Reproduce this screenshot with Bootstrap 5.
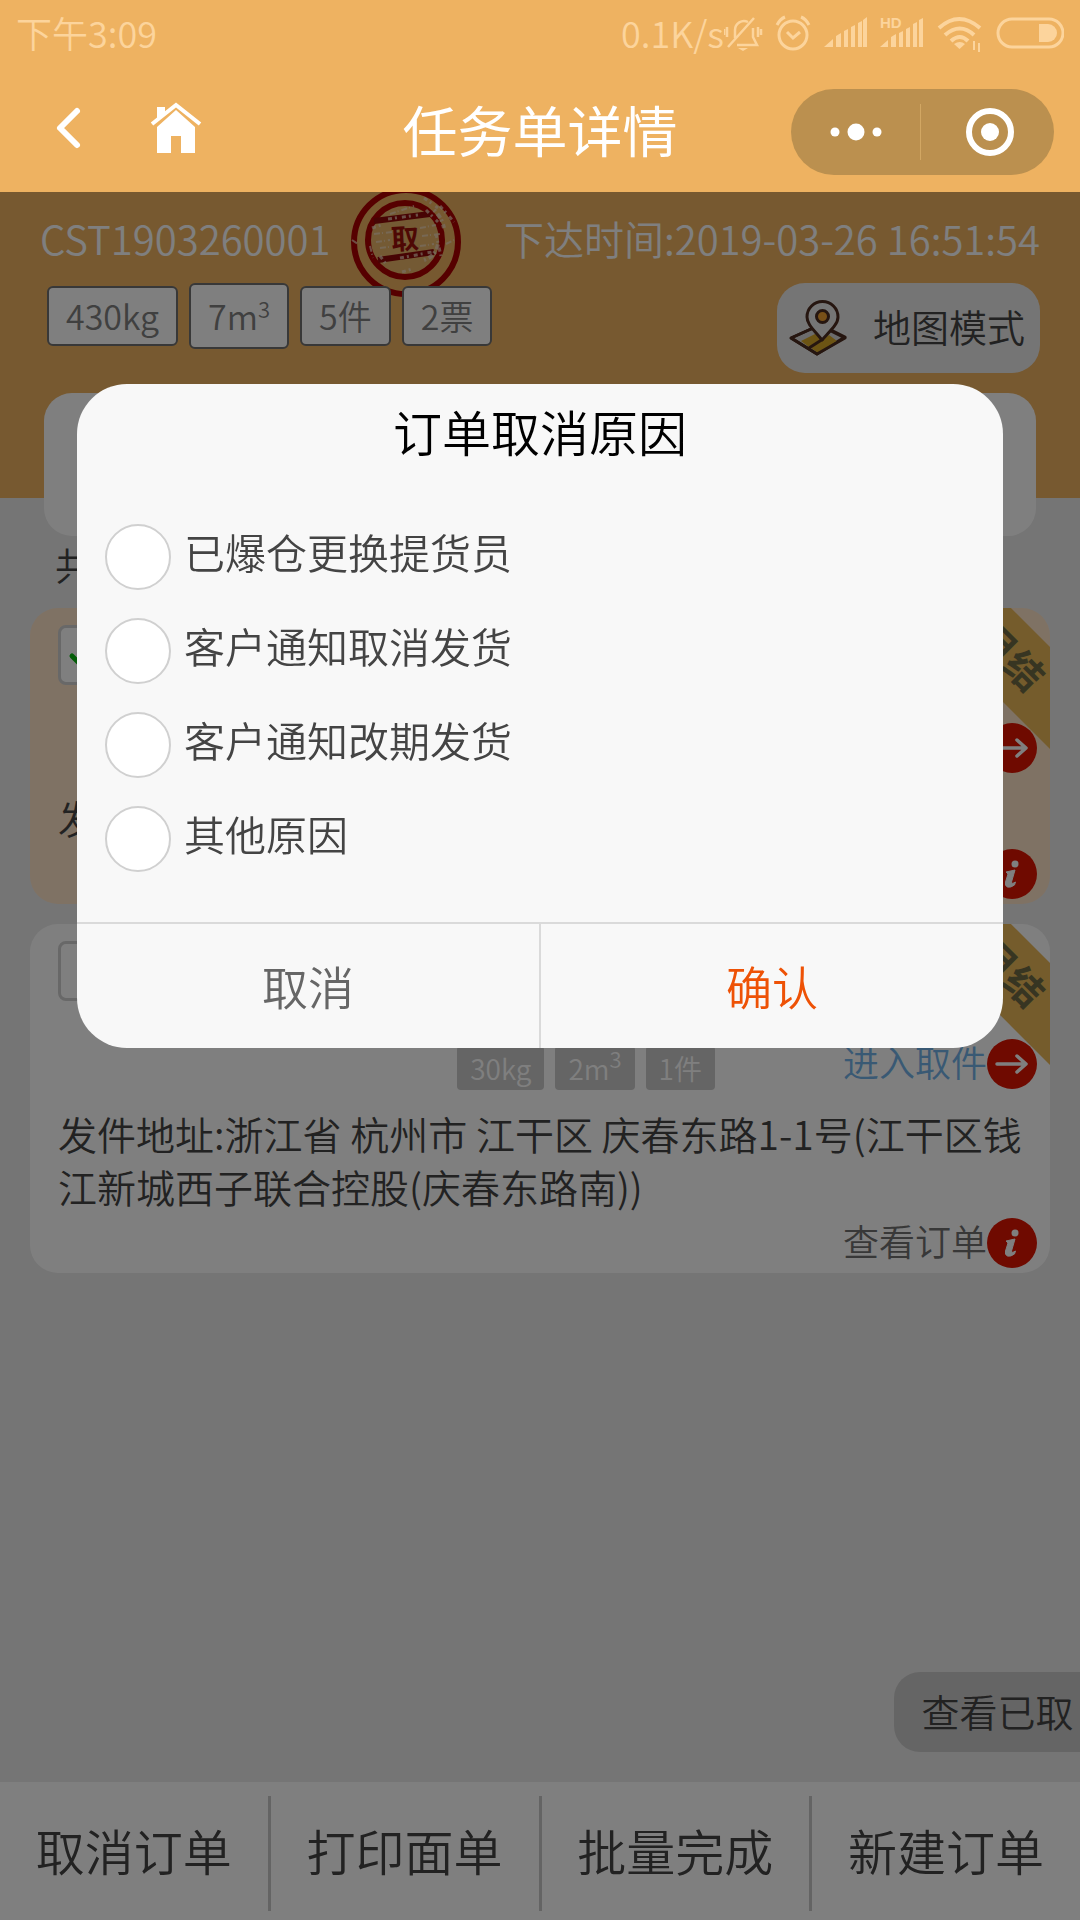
<!DOCTYPE html>
<html lang="zh-CN">
<head>
<meta charset="utf-8">
<meta name="viewport" content="width=device-width, initial-scale=1">
<title>任务单详情</title>
<link href="https://cdn.jsdelivr.net/npm/bootstrap@5.3.0/dist/css/bootstrap.min.css" rel="stylesheet">
<style>
:root { --brand: #eeb261; --ink: #444; }
body { font-family: "Noto Sans CJK SC", sans-serif; font-weight: 350; background: #ebebeb; color: var(--ink); }
button, a { font-weight: inherit; }
svg { display: block; flex: none; }
.plain-btn { border: 0; background: none; padding: 0; color: inherit; }

/* top bars stay above the dimmer */
.app-head { background: var(--brand); color: #fff; z-index: 20; height: 192px; }
.status-row { height: 66px; padding: 0 16px; font-size: 36px; color: #fcd49c; }
.status-row span { padding-bottom: 2px; }
.title-row { height: 126px; padding: 6px 26px 0 50px; }
.title-left { padding-bottom: 8px; }
.page-title { font-size: 55px; line-height: 80px; font-weight: 400; padding-bottom: 8px; }
.capsule { width: 263px; height: 86px; border-radius: 43px; background: #bb904f; }
.capsule .plain-btn { flex: 1; height: 56px; display: flex; align-items: center; justify-content: center; }
.capsule .plain-btn + .plain-btn { border-left: 1px solid #d2a763; padding-left: 4px; }

/* task summary */
.summary { background: var(--brand); padding: 18px 40px 125px; color: #fff; }
.summary-line { height: 60px; font-size: 40px; line-height: 56px; }
.summary-line span { padding-bottom: 4px; }
.stamp { margin: 0 0 0 20px; }
.summary-tools { margin-top: 13px; z-index: 1; }
.sum-tags { gap: 11px; padding-left: 7px; }
.sum-tag { background: #fff; color: #808080; border: 2px solid #707070; border-radius: 6px; font-size: 34px; line-height: 56px; padding: 0 17px; }
.sum-tag.tall { line-height: 62px; }
.sum-tag sup, .mini-tag sup { font-size: 22px; line-height: 0; top: -12px; vertical-align: baseline; }
.map-btn { background: #ebebeb; color: var(--ink); width: 263px; height: 90px; border-radius: 28px; font-size: 38px; padding: 0 15px 0 12px; }
.map-btn span { padding-bottom: 6px; }
.info-panel { background: #fff; height: 143px; margin: -105px 44px 0; border-radius: 28px; }
.count-line { font-size: 38px; line-height: 56px; padding: 0 55px 16px; }

/* orders */
.order { background: #fff; border-radius: 28px; margin: 0 30px 20px; padding: 17px 13px 5px 28px; overflow: hidden; font-size: 39px; }
.order.picked { background: #ffe4c8; }
.pick-box.form-check-input { width: 60px; height: 60px; margin: 0; border: 3px solid #d0d0d0; border-radius: 8px; background-color: #fff; display: block; }
.pick-box.form-check-input:checked { border-color: #d0d0d0; background-color: #fff; background-size: 44px; background-image: url("data:image/svg+xml,%3Csvg xmlns='http://www.w3.org/2000/svg' viewBox='0 0 44 44' fill='none' stroke='%2308bb10' stroke-width='5' stroke-linecap='round'%3E%3Cpath d='M6 23l10 10 22-24'/%3E%3C/svg%3E"); }
.ribbon { width: 240px; height: 72px; right: -80px; top: 14px; transform: rotate(45deg); background: #eab859; color: #6e6a44; font-size: 38px; line-height: 66px; font-weight: 700; text-align: center; }
.order-mid { height: 50px; margin-top: 38px; }
.order-tags { margin-right: 128px; gap: 11px; padding-top: 8px; }
.mini-tag { background: #cacaca; color: #fff; border-radius: 4px; font-size: 28px; line-height: 44px; padding: 0 13px; }
.act { font-size: 36px; line-height: 44px; text-decoration: none; z-index: 1; }
.act-go { color: #72b2e8; }
.act-see { color: #707070; }
.addr { line-height: 53px; margin: 18px 0 5px; padding-right: 12px; }

/* bottom */
.taken-btn { right: 0; bottom: 168px; width: 186px; height: 80px; border-radius: 26px 0 0 26px; background: #cbcbcb; color: var(--ink); font-size: 38px; white-space: nowrap; padding: 0 0 4px 21px; }
.action-bar { background: #fff; height: 138px; padding: 14px 0 9px; }
.action-bar .plain-btn { flex: 1; font-size: 49px; border-left: 3px solid #c8c8c8; padding-bottom: 8px; }
.action-bar .plain-btn:first-child { border-left: 0; }

/* dialog */
.dimmer { background: rgba(0,0,0,.5); z-index: 10; }
.dialog-wrap { z-index: 30; padding: 20vh 77px 0; }
.dialog-box { background: #f8f8f8; border-radius: 50px; overflow: hidden; padding-top: 14px; }
.dialog-title { font-size: 49px; line-height: 66px; color: #000; font-weight: inherit; margin: 0 0 46px; }
.reason { height: 94px; padding-left: 28px; gap: 13px; }
.reason label { font-size: 41px; line-height: 60px; padding-bottom: 12px; }
.reason .form-check-input { width: 66px; height: 66px; margin: 0; border: 2px solid #d0d0d0; background-color: #fff; flex: none; }
.dialog-foot { border-top: 2px solid #dadada; margin-top: 36px; height: 126px; font-size: 46px; }
.dialog-foot .plain-btn { flex: 1; color: #666; padding-bottom: 2px; }
.dialog-foot .plain-btn + .plain-btn { border-left: 2px solid #dadada; color: #ee5206; }
</style>
<script src="https://cdn.jsdelivr.net/npm/bootstrap@5.3.0/dist/js/bootstrap.bundle.min.js"></script>
</head>
<body class="d-flex flex-column min-vh-100">

<svg width="0" height="0" class="position-absolute" aria-hidden="true">
  <symbol id="go" viewBox="0 0 50 50"><circle cx="25" cy="25" r="25" fill="#de1400"/><path d="M10 25h28M30 17l9 8-9 8" fill="none" stroke="#fff" stroke-width="3.5" stroke-linecap="round" stroke-linejoin="round"/></symbol>
  <symbol id="see" viewBox="0 0 50 50"><circle cx="25" cy="25" r="25" fill="#de1400"/><circle cx="28" cy="15" r="3.5" fill="#fff"/><path d="M19 23l9-2-3.500 12q-.5 2.500 4 0l-1 3q-4 3-7 2t-2-5l2.500-8z" fill="#fff" stroke="#fff" stroke-linejoin="round"/></symbol>
</svg>

<header class="app-head position-relative">
  <div class="status-row d-flex align-items-center justify-content-between">
    <span>下午3:09</span>
    <div class="d-flex align-items-center">
      <span>0.1K/s</span>
      <svg width="340" height="40" viewBox="0 0 340 40" fill="none" stroke="#fcd49c" stroke-width="3" aria-hidden="true">
        <!-- muted bell -->
        <path d="M4 34L30 5M11 25V17a9 9 0 0 1 13-8M29 15v9l4 8H13M3 14v10M34 14v10M0 16v6M37 16v6" stroke-width="2.500"/><path d="M14 35h10l-5 3z" fill="#fcd49c" stroke="none"/>
        <!-- alarm -->
        <circle cx="69" cy="22" r="14"/><path d="M63 19l6 6 7-6M53 12q3-6 8-8M85 12q-3-6-8-8"/>
        <!-- signal -->
        <g fill="#fcd49c" stroke="none"><path d="M101 34h9v-8zM113 34h5V20l-5 3zM121 34h4V16l-4 2zM128 34h4V12l-4 2zM135 34h4V8l-4 2zM140 34h4V4l-4 3z" transform="translate(-1)"/>
        <path d="M158 34h8v-7zM169 34h5V21l-5 3zM177 34h4V18l-4 2zM184 34h4V14l-4 2zM191 34h4V9l-4 2zM197 34h4V5l-4 2z" transform="translate(-2)"/></g>
        <!-- wifi -->
        <path d="M215 15q20-18 41 0M221 22q15-13 29 0M227 28q9-8 17 0" stroke-width="4"/><path d="M230 31q6-4 11 0l-5.500 5z" fill="#fcd49c" stroke="none"/><path d="M250 28v9M255 30v9" stroke-width="2"/>
        <!-- battery -->
        <rect x="274" y="6" width="65" height="28" rx="14"/><path d="M315 11h9a9 9 0 0 1 0 18h-9z" fill="#fcd49c" stroke="none"/>
        <text x="156" y="15" font-size="15" font-weight="700" fill="#fcd49c" stroke="none" font-family="Liberation Sans, sans-serif">HD</text>
      </svg>
    </div>
  </div>
  <div class="title-row position-relative d-flex align-items-center justify-content-between">
    <div class="title-left d-flex align-items-center">
      <button class="plain-btn" aria-label="返回"><svg width="36" height="48" viewBox="0 0 36 48"><path d="M27 7L10 24l17 17" fill="none" stroke="#fff" stroke-width="6" stroke-linecap="round" stroke-linejoin="round"/></svg></button>
      <button class="plain-btn ms-5" aria-label="首页"><svg width="86" height="52" viewBox="0 0 86 52" fill="#fff"><path d="M23 51V25L42 8l19 17v26H47V34H37v17z"/><path d="M23 5h8v5l-8 7z"/><path d="M18 22L42 3l24 19" fill="none" stroke="#fff" stroke-width="4"/></svg></button>
    </div>
    <h1 class="page-title position-absolute start-50 translate-middle-x mb-0">任务单详情</h1>
    <div class="capsule d-flex align-items-center">
      <button class="plain-btn" aria-label="更多"><svg width="60" height="30" viewBox="0 0 60 30" fill="#fff"><circle cx="9" cy="15" r="4.500"/><circle cx="30" cy="15" r="8.500"/><circle cx="51" cy="15" r="4.500"/></svg></button>
      <button class="plain-btn" aria-label="关闭"><svg width="50" height="50" viewBox="0 0 50 50"><circle cx="25" cy="25" r="21" fill="none" stroke="#fff" stroke-width="6"/><circle cx="25" cy="25" r="9" fill="#fff"/></svg></button>
    </div>
  </div>
</header>

<main class="flex-grow-1">
  <section class="summary">
    <div class="summary-line d-flex align-items-center justify-content-between">
      <div class="d-flex align-items-center">
        <span>CST1903260001</span>
        <svg class="stamp" width="112" height="116" viewBox="0 -2 112 116" role="img" aria-label="取">
          <circle cx="56" cy="58" r="52" fill="none" stroke="#ad0000" stroke-width="6"/>
          <circle cx="55" cy="56" r="37" fill="#e8b468" stroke="#ad0000" stroke-width="6"/>
          <path d="M24 37L80 30M28 76L84 68" stroke="#8e0808" stroke-width="6"/>
          <g fill="none" stroke="#f2dcc4" opacity=".7">
            <path d="M22 44l12-4M38 35l30-4M76 26l12 12M86 50l5 22M30 72l6 8M52 88l10-3M50 74l32-6M74 14l14 10M90 22l14 16" stroke-width="3" stroke-dasharray="4 3 2 5"/>
            <path d="M24 50l18-2M26 58l14-2M30 64l16-2M70 44l16-3M72 52l18-2M70 62l14-2M40 30l24-8M2 56l6 4M96 60l8-4M20 62l3 12" stroke-width="2" stroke-dasharray="6 2 1 3"/>
            <path d="M74 76q12-4 14-16M84 26q8 8 10 18" stroke-width="4" stroke-dasharray="2 3 5 2"/>
          </g>
          <text x="55" y="65" text-anchor="middle" font-size="28" font-weight="700" fill="#9c1008" font-family="Noto Sans CJK SC, sans-serif" transform="rotate(-3 55 56)">取</text>
        </svg>
      </div>
      <span>下达时间:2019-03-26 16:51:54</span>
    </div>
    <div class="summary-tools position-relative d-flex align-items-start justify-content-between">
      <div class="sum-tags d-flex align-items-center">
        <span class="sum-tag">430kg</span>
        <span class="sum-tag tall">7m<sup>3</sup></span>
        <span class="sum-tag">5件</span>
        <span class="sum-tag">2票</span>
      </div>
      <button class="plain-btn map-btn d-flex align-items-center justify-content-between">
        <svg width="58" height="58" viewBox="0 0 58 58" stroke="#4c2c20" stroke-width="3" stroke-linejoin="round"><path d="M2 39L22 30l14-2 20 10-28 17z" fill="#d8d8d8"/><path d="M12 42l14-7 8 4-14 9zM22 49l18-13 8 6-19 12z" fill="#d8a828" stroke="none"/><path d="M2 39L22 30M36 29l20 10-28 16L2 39M20 49l14-9" fill="none"/><path d="M33 41C24 30 18 25 18 18a15 15 0 0 1 31 0c0 7-7 13-16 23z" fill="#ebebeb"/><circle cx="33.500" cy="17.500" r="6" fill="#f0a030"/></svg>
        <span>地图模式</span>
      </button>
    </div>
  </section>

  <div class="info-panel position-relative"></div>
  <div class="count-line">共2票</div>

  <article class="order picked position-relative">
    <div class="ribbon position-absolute">月结</div>
    <input type="checkbox" class="form-check-input pick-box" checked aria-label="选择订单">
    <div class="order-mid d-flex align-items-center justify-content-end">
      <a href="#" class="act act-go d-flex position-relative">进入取件<svg width="50" height="50"><use href="#go"/></svg></a>
    </div>
    <p class="addr">发件地址:</p>
    <div class="d-flex justify-content-end">
      <a href="#" class="act act-see d-flex">查看订单<svg width="50" height="50"><use href="#see"/></svg></a>
    </div>
  </article>

  <article class="order position-relative">
    <div class="ribbon position-absolute">月结</div>
    <input type="checkbox" class="form-check-input pick-box" aria-label="选择订单">
    <div class="order-mid d-flex align-items-center justify-content-end">
      <div class="order-tags d-flex">
        <span class="mini-tag">30kg</span>
        <span class="mini-tag">2m<sup>3</sup></span>
        <span class="mini-tag">1件</span>
      </div>
      <a href="#" class="act act-go d-flex position-relative">进入取件<svg width="50" height="50"><use href="#go"/></svg></a>
    </div>
    <p class="addr">发件地址:浙江省 杭州市 江干区 庆春东路1-1号(江干区钱江新城西子联合控股(庆春东路南))</p>
    <div class="d-flex justify-content-end">
      <a href="#" class="act act-see d-flex">查看订单<svg width="50" height="50"><use href="#see"/></svg></a>
    </div>
  </article>
</main>

<button class="plain-btn taken-btn position-fixed">查看已取</button>

<footer class="action-bar d-flex">
  <button class="plain-btn">取消订单</button>
  <button class="plain-btn">打印面单</button>
  <button class="plain-btn">批量完成</button>
  <button class="plain-btn">新建订单</button>
</footer>

<div class="dimmer position-fixed top-0 start-0 w-100 h-100"></div>
<div class="dialog-wrap position-fixed top-0 start-0 w-100" role="dialog" aria-modal="true" aria-labelledby="dlg-title">
  <form class="dialog-box">
    <h2 class="dialog-title text-center" id="dlg-title">订单取消原因</h2>
    <div class="reason d-flex align-items-center"><input class="form-check-input" type="radio" name="reason" id="r1"><label for="r1">已爆仓更换提货员</label></div>
    <div class="reason d-flex align-items-center"><input class="form-check-input" type="radio" name="reason" id="r2"><label for="r2">客户通知取消发货</label></div>
    <div class="reason d-flex align-items-center"><input class="form-check-input" type="radio" name="reason" id="r3"><label for="r3">客户通知改期发货</label></div>
    <div class="reason d-flex align-items-center"><input class="form-check-input" type="radio" name="reason" id="r4"><label for="r4">其他原因</label></div>
    <div class="dialog-foot d-flex">
      <button type="button" class="plain-btn">取消</button>
      <button type="button" class="plain-btn">确认</button>
    </div>
  </form>
</div>
</body>
</html>
